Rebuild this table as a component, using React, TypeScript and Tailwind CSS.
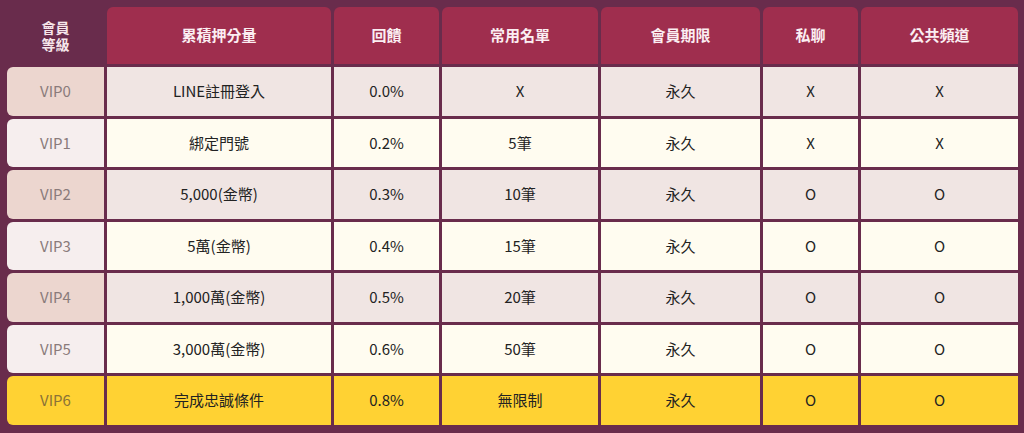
import React from "react";

const headers = ["累積押分量", "回饋", "常用名單", "會員期限", "私聊", "公共頻道"];

const rows = [
  ["VIP0", "LINE註冊登入", "0.0%", "X", "永久", "X", "X"],
  ["VIP1", "綁定門號", "0.2%", "5筆", "永久", "X", "X"],
  ["VIP2", "5,000(金幣)", "0.3%", "10筆", "永久", "O", "O"],
  ["VIP3", "5萬(金幣)", "0.4%", "15筆", "永久", "O", "O"],
  ["VIP4", "1,000萬(金幣)", "0.5%", "20筆", "永久", "O", "O"],
  ["VIP5", "3,000萬(金幣)", "0.6%", "50筆", "永久", "O", "O"],
  ["VIP6", "完成忠誠條件", "0.8%", "無限制", "永久", "O", "O"],
];

export default function App() {
  return (
    <div
      className="w-[1024px] h-[433px] bg-[#692c4c] pt-[7px] pl-[7px] pr-[6px] pb-[8px]"
      style={{ fontFamily: '"Noto Sans CJK TC", "Noto Sans", sans-serif' }}
    >
      <div className="grid grid-cols-[97fr_224fr_105fr_156fr_159fr_95fr_157fr] grid-rows-[57px_repeat(7,minmax(0,1fr))] gap-[3px] h-full">
        <div className="flex flex-col items-center justify-center text-[#f6e6ea] font-bold text-[14px] text-center">
          <span className="block leading-[17px]">會員</span>
          <span className="block leading-[17px]">等級</span>
        </div>
        {headers.map((h) => (
          <div
            key={h}
            className="flex items-center justify-center bg-[#9f2e4e] text-[#fbeef2] font-bold text-[15px] rounded-t-[6px]"
          >
            {h}
          </div>
        ))}
        {rows.map((r, i) => {
          const last = i === rows.length - 1;
          const odd = i % 2 === 0;
          const rowBg = last ? "bg-[#ffd233]" : odd ? "bg-[#f0e5e3]" : "bg-[#fffcf0]";
          const vipBg = last ? "bg-[#ffd233]" : odd ? "bg-[#ecd6cf]" : "bg-[#f6eeee]";
          const vipText = last ? "text-[#8b7337]" : "text-[#8a7b7b]";
          return (
            <React.Fragment key={r[0]}>
              <div
                className={`flex items-center justify-center rounded-l-[6px] text-[15px] ${vipBg} ${vipText}`}
              >
                {r[0]}
              </div>
              {r.slice(1).map((c, j) => (
                <div
                  key={j}
                  className={`flex items-center justify-center text-[15px] text-[#222222] ${rowBg}`}
                >
                  {c}
                </div>
              ))}
            </React.Fragment>
          );
        })}
      </div>
    </div>
  );
}
